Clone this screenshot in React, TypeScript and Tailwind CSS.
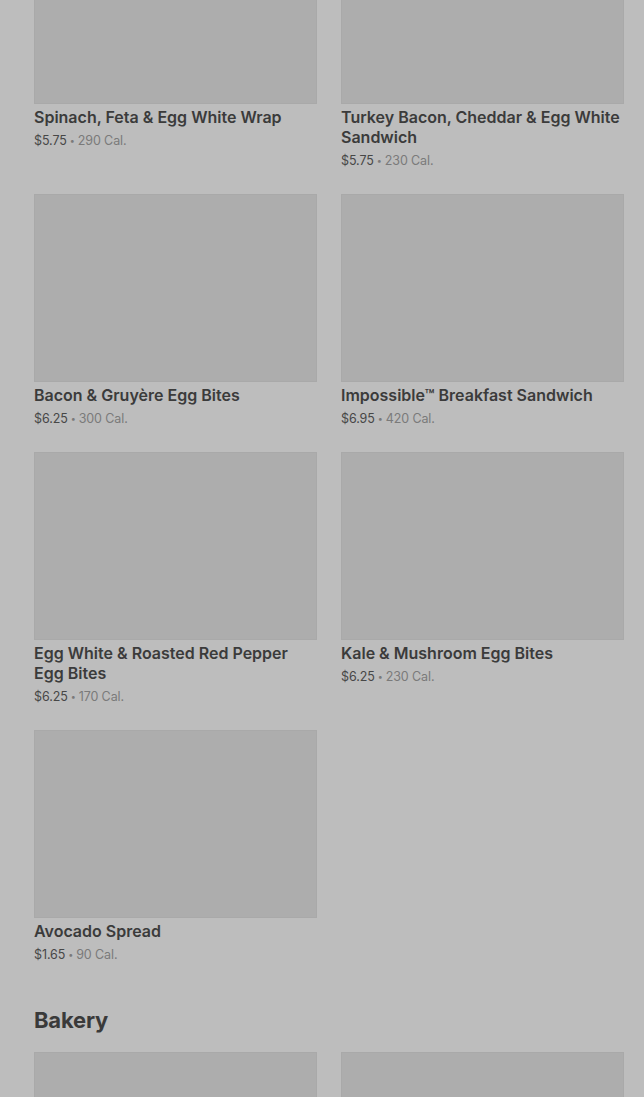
type Item = { name: string; price: string; cal: string };

const breakfast: Item[] = [
  { name: "Spinach, Feta & Egg White Wrap", price: "$5.75", cal: "290 Cal." },
  { name: "Turkey Bacon, Cheddar & Egg White Sandwich", price: "$5.75", cal: "230 Cal." },
  { name: "Bacon & Gruyère Egg Bites", price: "$6.25", cal: "300 Cal." },
  { name: "Impossible™ Breakfast Sandwich", price: "$6.95", cal: "420 Cal." },
  { name: "Egg White & Roasted Red Pepper Egg Bites", price: "$6.25", cal: "170 Cal." },
  { name: "Kale & Mushroom Egg Bites", price: "$6.25", cal: "230 Cal." },
  { name: "Avocado Spread", price: "$1.65", cal: "90 Cal." },
];

const bakery: Item[] = [
  { name: "", price: "", cal: "" },
  { name: "", price: "", cal: "" },
];

function ProductCard({ item }: { item: Item }) {
  return (
    <div className="flex flex-col">
      <div className="h-[188px] w-full bg-[#adadad] border border-[#a9a9a9]" />
      {item.name && (
        <div className="mt-[3px]">
          <p className="text-[16px] leading-[20px] font-semibold text-[#3b3b3b]">{item.name}</p>
          <p className="mt-[4px] text-[12.5px] leading-[20px] text-[#7a7a7a] tracking-[-0.1px]">
            <span className="text-[#474747]">{item.price}</span>
            <span className="mx-[3px] text-[9px] align-[1px]">•</span>
            {item.cal}
          </p>
        </div>
      )}
    </div>
  );
}

export default function App() {
  return (
    <main
      className="min-h-screen bg-[#bdbdbd] overflow-hidden"
      style={{ fontFamily: "Inter, 'Noto Sans', sans-serif" }}
    >
      <div className="-mt-[84px] pl-[34px] pr-[20px]">
        <div className="grid grid-cols-2 gap-x-[24px] gap-y-[23px]">
          {breakfast.map((item) => (
            <ProductCard key={item.name} item={item} />
          ))}
        </div>

        <h2 className="mt-[39px] mb-[16px] text-[22px] leading-[32px] font-bold text-[#3a3a3a] tracking-[-0.2px]">
          Bakery
        </h2>
        <div className="grid grid-cols-2 gap-x-[24px] gap-y-[24px]">
          {bakery.map((item, i) => (
            <ProductCard key={i} item={item} />
          ))}
        </div>
      </div>
    </main>
  );
}
